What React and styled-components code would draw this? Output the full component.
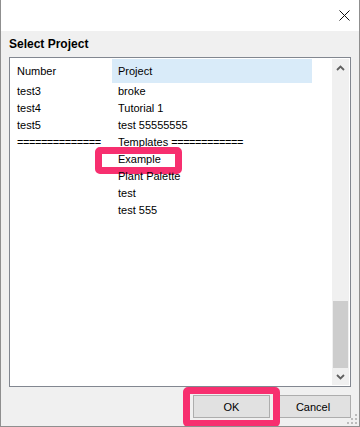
import * as React from "react";
import styled, { createGlobalStyle } from "styled-components";

const GlobalStyle = createGlobalStyle`
  html, body {
    margin: 0;
    padding: 0;
    background: #fff;
  }
  * {
    box-sizing: border-box;
  }
`;

const Window = styled.div`
  position: relative;
  width: 360px;
  height: 427px;
  display: flex;
  flex-direction: column;
  border: 1px solid #8f8f8f;
  border-top: none;
  font-family: "Liberation Sans", Arial, sans-serif;
  color: #000;
  overflow: hidden;
`;

const TitleBar = styled.div`
  height: 31px;
  flex: none;
  background: #fff;
  display: flex;
  align-items: center;
  justify-content: flex-end;
  padding-right: 9px;
`;

const Body = styled.div`
  flex: 1;
  display: flex;
  flex-direction: column;
  background: #f0f0f0;
  padding: 6px 8px 0 8px;
`;

const Heading = styled.div`
  font-weight: 700;
  font-size: 12px;
  line-height: 15px;
  height: 15px;
  margin-bottom: 5px;
`;

const ListBox = styled.div`
  height: 330px;
  flex: none;
  display: flex;
  background: #fff;
  border: 1px solid #828790;
  padding: 1px;
`;

const ListContent = styled.div`
  flex: 1;
  display: flex;
  flex-direction: column;
`;

const Row = styled.div`
  display: grid;
  grid-template-columns: 101px 200px;
  height: ${(p) => (p.$header ? 24 : 17)}px;
  font-size: 11px;
  line-height: ${(p) => (p.$header ? 24 : 17)}px;
`;

const Cell = styled.div`
  position: relative;
  padding-left: 6px;
  white-space: nowrap;
  background: ${(p) => (p.$hot ? "#d9ebf9" : "transparent")};
`;

const Rule = styled.span`
  letter-spacing: -0.45px;
`;

const Callout = styled.div`
  position: absolute;
  left: -17px;
  top: -4px;
  width: 87px;
  height: 27px;
  border: 7px solid #f72f6f;
  border-radius: 5px;
  pointer-events: none;
`;

const ScrollBar = styled.div`
  width: 17px;
  flex: none;
  display: flex;
  flex-direction: column;
  background: #f0f0f0;
`;

const ArrowButton = styled.div`
  height: 17px;
  flex: none;
  display: flex;
  align-items: center;
  justify-content: center;
`;

const Track = styled.div`
  flex: 1;
`;

const Thumb = styled.div`
  height: 67px;
  flex: none;
  margin: 0 1px 0 1px;
  background: #cdcdcd;
`;

const Footer = styled.div`
  display: flex;
  justify-content: flex-end;
  gap: 5px;
  margin-top: 8px;
`;

const ButtonWrap = styled.div`
  position: relative;
`;

const Button = styled.div`
  width: ${(p) => p.$width || 76}px;
  height: 23px;
  display: flex;
  align-items: center;
  justify-content: center;
  background: #e1e1e1;
  border: 1px solid #adadad;
  font-size: 11px;
`;

const ButtonCallout = styled.div`
  position: absolute;
  left: -10px;
  right: -10px;
  top: -8px;
  bottom: -9px;
  border: 7px solid #f72f6f;
  border-radius: 5px;
  pointer-events: none;
`;

const Grip = styled.svg`
  position: absolute;
  right: 1px;
  bottom: 1px;
`;

const rows = [
  ["test3", "broke"],
  ["test4", "Tutorial 1"],
  ["test5", "test 55555555"],
  ["rule", "templates"],
  ["", "Example", true],
  ["", "Plant Palette"],
  ["", "test"],
  ["", "test 555"],
];

const Chevron = ({ up }) => (
  <svg width="9" height="6" viewBox="0 0 9 6">
    <path
      d={up ? "M1 5 L4.5 1.5 L8 5" : "M1 1 L4.5 4.5 L8 1"}
      fill="none"
      stroke="#606060"
      strokeWidth="1.8"
    />
  </svg>
);

const App = () => {
  return (
    <Window>
      <GlobalStyle />
      <TitleBar>
        <svg width="11" height="11" viewBox="0 0 11 11">
          <path d="M0.5 0.5 L10.5 10.5 M10.5 0.5 L0.5 10.5" stroke="#111" strokeWidth="1" />
        </svg>
      </TitleBar>
      <Body>
        <Heading>Select Project</Heading>
        <ListBox>
          <ListContent>
            <Row $header>
              <Cell>Number</Cell>
              <Cell $hot>Project</Cell>
            </Row>
            {rows.map(([num, name, marked], i) => (
              <Row key={i}>
                <Cell>{num === "rule" ? <Rule>==============</Rule> : num}</Cell>
                <Cell>
                  {name === "templates" ? (
                    <>
                      Templates <Rule>============</Rule>
                    </>
                  ) : (
                    name
                  )}
                  {marked && <Callout />}
                </Cell>
              </Row>
            ))}
          </ListContent>
          <ScrollBar>
            <ArrowButton>
              <Chevron up />
            </ArrowButton>
            <Track />
            <Thumb />
            <ArrowButton>
              <Chevron />
            </ArrowButton>
          </ScrollBar>
        </ListBox>
        <Footer>
          <ButtonWrap>
            <Button $width={77}>OK</Button>
            <ButtonCallout />
          </ButtonWrap>
          <Button>Cancel</Button>
        </Footer>
      </Body>
      <Grip width="12" height="12" viewBox="0 0 12 12">
        <g fill="#bcbcbc">
          <rect x="9" y="1" width="2" height="2" />
          <rect x="5" y="5" width="2" height="2" />
          <rect x="9" y="5" width="2" height="2" />
          <rect x="1" y="9" width="2" height="2" />
          <rect x="5" y="9" width="2" height="2" />
          <rect x="9" y="9" width="2" height="2" />
        </g>
      </Grip>
    </Window>
  );
};

export default App;
